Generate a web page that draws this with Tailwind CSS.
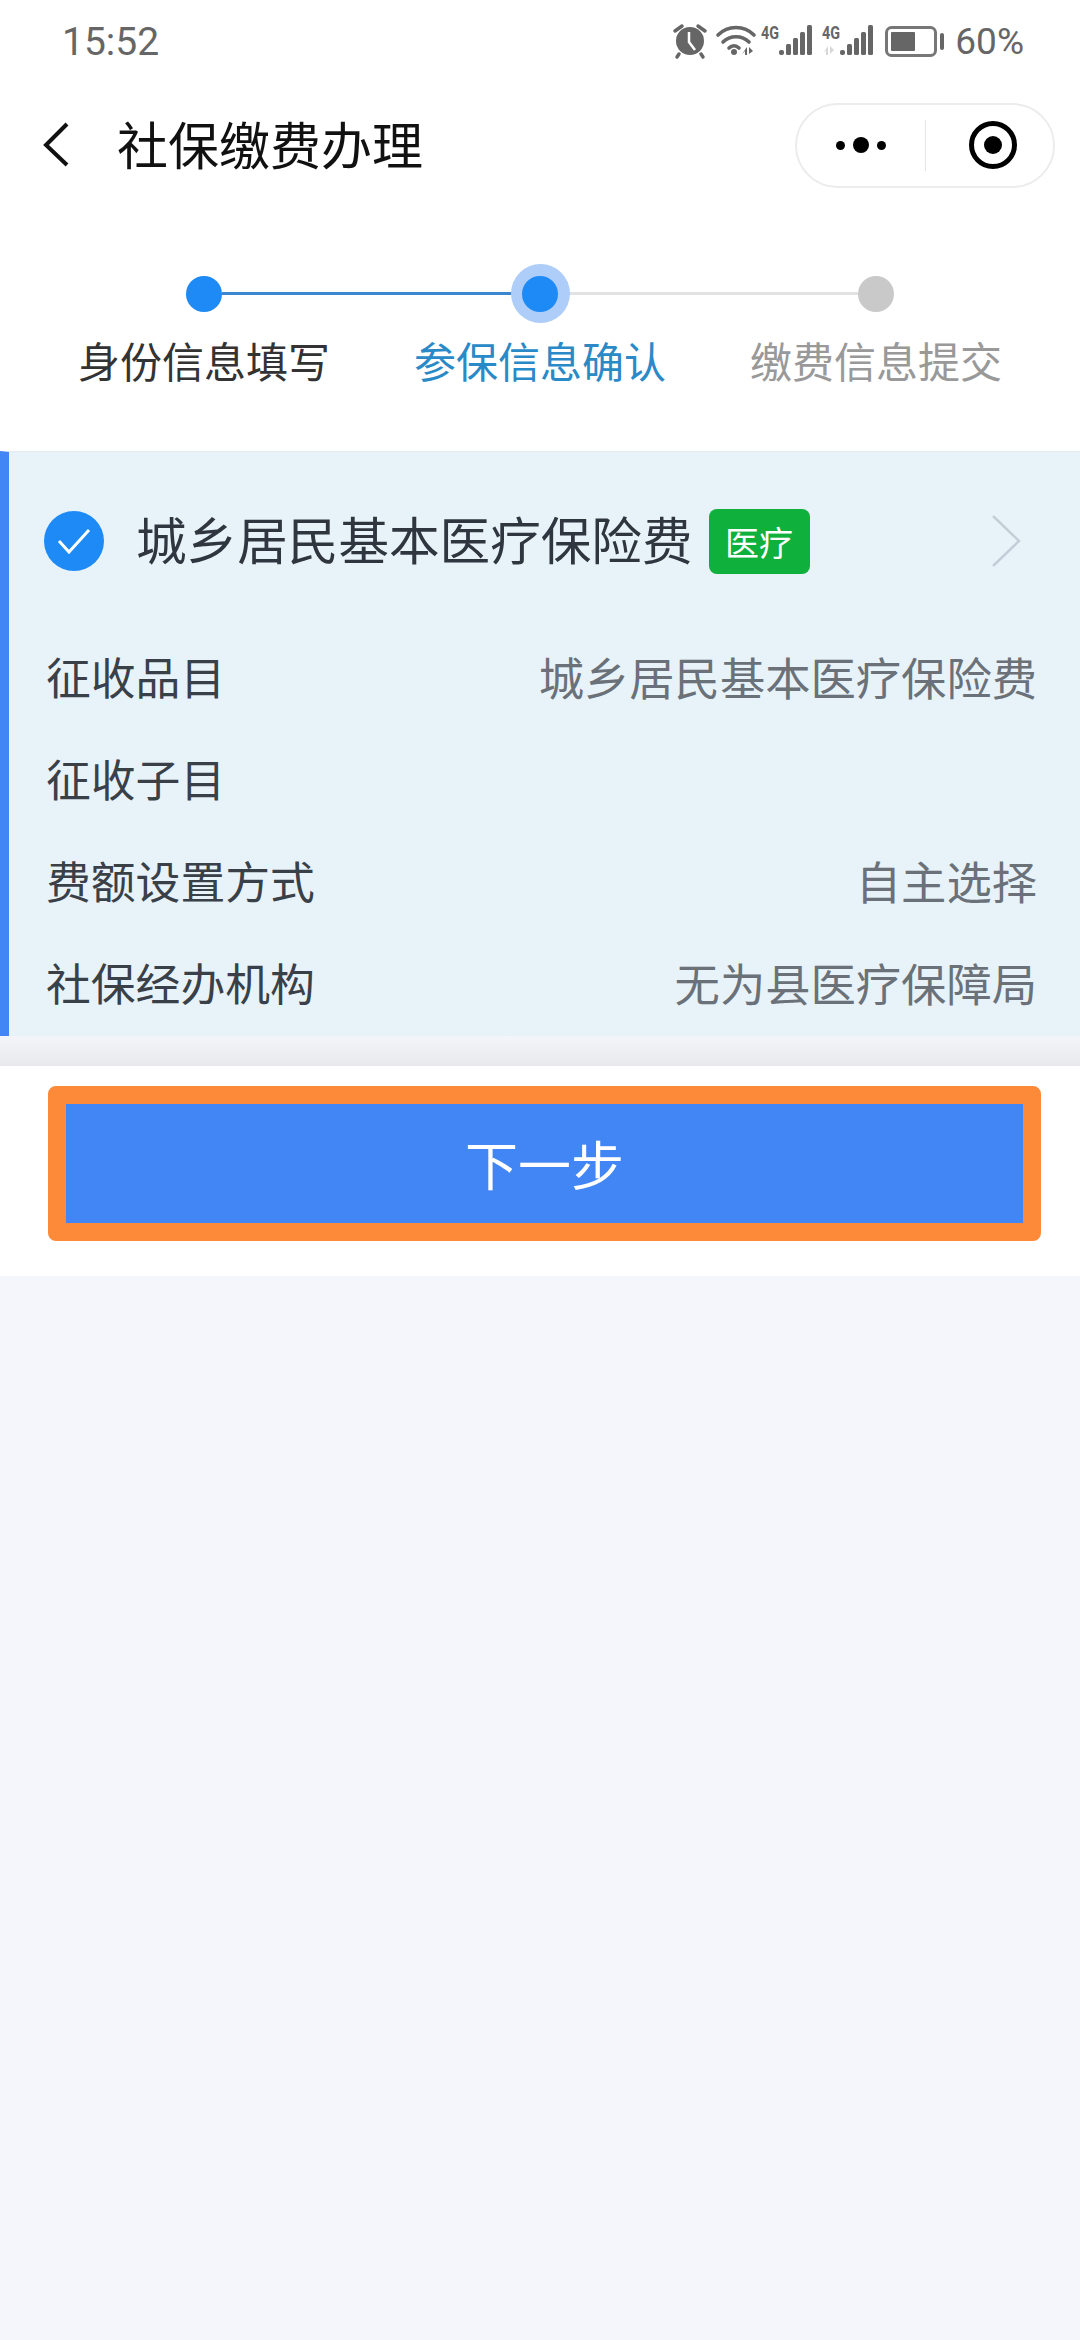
<!DOCTYPE html>
<html lang="zh-CN">
<head>
  <meta charset="UTF-8" />
  <meta name="viewport" content="width=device-width, initial-scale=1.0" />
  <title>社保缴费办理</title>
  <script src="https://cdn.jsdelivr.net/npm/@tailwindcss/browser@4"></script>
</head>
<body class="bg-[#f4f6fb] min-h-screen font-['Noto_Sans_CJK_SC','Noto_Sans',sans-serif]">
  <div class="bg-white h-[451px]">
    <!-- status bar -->
    <div class="h-[82px] flex items-start justify-between">
      <span class="ml-[62px] mt-[20px] text-[39px] leading-[44px] text-[#666] font-['Roboto',sans-serif]">15:52</span>
      <div class="flex items-start">
        <svg class="mt-[15px]" width="310" height="50" viewBox="640 15 310 50" fill="#666">
          <!-- alarm -->
          <circle cx="690" cy="41" r="14"/>
          <path d="M675 31l7-5M705 31l-7-5M679 54l-2 3M701 54l2 3" stroke="#666" stroke-width="3.5" stroke-linecap="round" fill="none"/>
          <path d="M689 32v10l6 8" stroke="#fff" stroke-width="2.5" fill="none"/>
          <!-- wifi -->
          <path d="M718 35c10-10 26-10 36 0M723 42c7-7 19-7 26 0M729 48c3-3 7-3 10 0" stroke="#666" stroke-width="3.6" stroke-linecap="round" fill="none"/>
          <circle cx="734" cy="52" r="3"/>
          <path d="M747 47v8h-2v-4l-3 3zM749 47l4 4-4 3z"/>
          <!-- sim 1 -->
          <text x="761" y="39" font-family="Roboto" font-weight="700" font-size="18" textLength="18" lengthAdjust="spacingAndGlyphs">4G</text>
          <rect x="779" y="50" width="5" height="5" rx="2"/>
          <rect x="786" y="44" width="5" height="11" rx="1.5"/>
          <rect x="793" y="38" width="5" height="17" rx="1.5"/>
          <rect x="800" y="32" width="5" height="23" rx="1.5"/>
          <rect x="807" y="25" width="5" height="30" rx="1.5"/>
          <!-- sim 2 -->
          <text x="822" y="39" font-family="Roboto" font-weight="700" font-size="18" textLength="18" lengthAdjust="spacingAndGlyphs">4G</text>
          <path d="M828 46v9h-2v-5l-3 3zM830 46l4 4-4 4z" fill="#d8d8d8"/>
          <rect x="840" y="50" width="5" height="5" rx="2"/>
          <rect x="847" y="44" width="5" height="11" rx="1.5"/>
          <rect x="854" y="38" width="5" height="17" rx="1.5"/>
          <rect x="861" y="32" width="5" height="23" rx="1.5"/>
          <rect x="868" y="25" width="5" height="30" rx="1.5"/>
          <!-- battery -->
          <rect x="886.5" y="27.5" width="49" height="28" rx="5" fill="none" stroke="#777" stroke-width="3"/>
          <rect x="891" y="32" width="24" height="19" rx="1"/>
          <rect x="940" y="33" width="4" height="17" rx="2"/>
        </svg>
        <span class="ml-[5px] mt-[20px] text-[37px] leading-[44px] text-[#666] font-['Roboto',sans-serif]">60%</span>
        <span class="w-[56px]"></span>
      </div>
    </div>

    <!-- nav -->
    <div class="h-[106px] flex items-center justify-between pt-[20px]">
      <div class="flex items-center">
        <svg class="ml-[42px]" width="28" height="48" viewBox="0 0 28 48" fill="none">
          <path d="M25 3L4 24l21 20" stroke="#111" stroke-width="4"/>
        </svg>
        <h1 class="ml-[47px] mb-[5px] text-[51px] leading-[60px] text-[#111] font-normal">社保缴费办理</h1>
      </div>
      <div class="mr-[25px] w-[260px] h-[85px] rounded-full border-2 border-[#ececec] flex items-center">
        <div class="w-[128px] flex items-center justify-center gap-[8px]">
          <span class="w-[9px] h-[9px] rounded-full bg-black"></span>
          <span class="w-[16px] h-[16px] rounded-full bg-black"></span>
          <span class="w-[9px] h-[9px] rounded-full bg-black"></span>
        </div>
        <div class="w-px h-[51px] bg-[#e5e5e5]"></div>
        <div class="flex-1 flex justify-center pl-[6px]">
          <span class="w-[48px] h-[48px] rounded-full border-[5px] border-black flex items-center justify-center">
            <span class="w-[18px] h-[18px] rounded-full bg-black"></span>
          </span>
        </div>
      </div>
    </div>

    <!-- stepper -->
    <div class="relative mt-[76px] px-[36px] grid grid-cols-3">
      <div class="absolute left-[222px] top-[28px] w-[290px] h-[3px] bg-[#3d86d0]"></div>
      <div class="absolute left-[568px] top-[28px] w-[290px] h-[3px] bg-[#e2e2e2]"></div>
      <div class="relative flex flex-col items-center">
        <div class="h-[59px] flex items-center"><span class="w-[36px] h-[36px] rounded-full bg-[#1e8af5]"></span></div>
        <span class="mt-[12px] text-[42px] leading-[50px] text-[#333]">身份信息填写</span>
      </div>
      <div class="relative flex flex-col items-center">
        <div class="w-[59px] h-[59px] rounded-full bg-[#aecdf8] flex items-center justify-center"><span class="w-[36px] h-[36px] rounded-full bg-[#1e8af5]"></span></div>
        <span class="mt-[12px] text-[42px] leading-[50px] text-[#2a8ac8]">参保信息确认</span>
      </div>
      <div class="relative flex flex-col items-center">
        <div class="h-[59px] flex items-center"><span class="w-[36px] h-[36px] rounded-full bg-[#c9c9c9]"></span></div>
        <span class="mt-[12px] text-[42px] leading-[50px] text-[#999]">缴费信息提交</span>
      </div>
    </div>
  </div>

  <!-- insurance card -->
  <div class="h-[585px] bg-[#e8f3f9] border-l-[9px] border-[#4285f4] border-t border-t-[#e6ebef]">
    <div class="h-[178px] flex items-center pl-[35px] pr-[59px]">
      <span class="w-[60px] h-[60px] rounded-full bg-[#1e8af5] flex items-center justify-center">
        <svg width="34" height="26" viewBox="0 0 34 26" fill="none">
          <path d="M2 13l10 11L32 2" stroke="#fff" stroke-width="3"/>
        </svg>
      </span>
      <span class="ml-[32px] mb-[6px] text-[50.6px] leading-[60px] text-[#2f3640] whitespace-nowrap">城乡居民基本医疗保险费</span>
      <span class="ml-[16px] w-[101px] h-[65px] rounded-[8px] bg-[#0fb03c] text-white text-[34px] flex items-center justify-center">医疗</span>
      <svg class="ml-auto" width="30" height="52" viewBox="0 0 30 52" fill="none">
        <path d="M2 1l26 25L2 51" stroke="#c5ced8" stroke-width="2.5"/>
      </svg>
    </div>
    <div class="pl-[37px] pr-[43px] pt-[3px] text-[44.8px] leading-[60px]">
      <div class="h-[102px] -mt-[8px] flex items-center justify-between">
        <span class="text-[#3a4048]">征收品目</span>
        <span class="text-[#6b7178] text-[45.3px]">城乡居民基本医疗保险费</span>
      </div>
      <div class="h-[102px] flex items-center justify-between">
        <span class="text-[#3a4048]">征收子目</span>
        <span class="text-[#6b7178] text-[45.3px]"></span>
      </div>
      <div class="h-[102px] flex items-center justify-between">
        <span class="text-[#3a4048]">费额设置方式</span>
        <span class="text-[#6b7178] text-[45.3px]">自主选择</span>
      </div>
      <div class="h-[102px] flex items-center justify-between">
        <span class="text-[#3a4048]">社保经办机构</span>
        <span class="text-[#6b7178] text-[45.3px]">无为县医疗保障局</span>
      </div>
    </div>
  </div>

  <div class="h-[30px] bg-gradient-to-b from-[#f4f5fa] to-[#e8e9ec]"></div>

  <!-- footer button -->
  <div class="h-[210px] bg-white pt-[20px] pl-[48px]">
    <button class="w-[993px] h-[155px] rounded-[8px] border-[18px] border-[#fd8a38] bg-[#4285f4] text-white text-[53px] leading-none flex items-center justify-center bg-clip-padding">下一步</button>
  </div>
</body>
</html>
